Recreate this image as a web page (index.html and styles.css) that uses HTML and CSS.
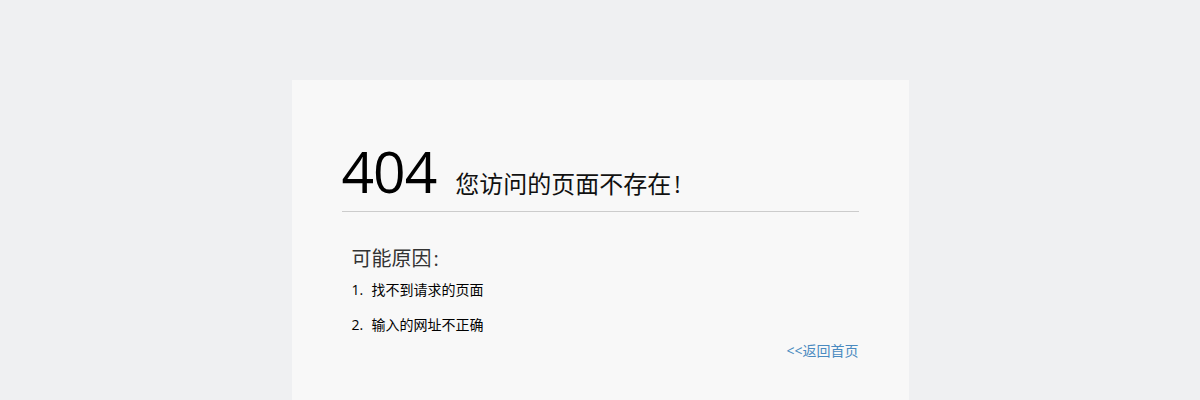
FILE: index.html
```html
<!DOCTYPE html>
<html lang="zh-CN">
<head>
    <meta charset="UTF-8">
    <title>404 - 页面不存在</title>
    <link rel="stylesheet" href="styles.css">
</head>
<body>
    <div class="error-box">
        <h1 class="error-title">
            <span class="code">404</span>
            <span class="msg">您访问的页面不存在<span class="bang">!</span></span>
        </h1>
        <div class="reason">
            <h3>可能原因<span class="colon">:</span></h3>
            <ol>
                <li>找不到请求的页面</li>
                <li>输入的网址不正确</li>
            </ol>
            <p class="back"><a href="/">&lt;&lt;返回首页</a></p>
        </div>
    </div>
</body>
</html>
```

FILE: styles.css
```css
body {
    margin: 0;
    padding: 0;
    background-color: #eff0f2;
    font-family: "Open Sans", "Noto Sans CJK SC", sans-serif;
    color: #000;
}
.error-box {
    width: 517px;
    margin: 80px auto 0;
    padding: 58px 50px 40px;
    background-color: #f8f8f8;
    min-height: 240px;
}
.error-title {
    margin: 0;
    padding-bottom: 7px;
    border-bottom: 1px solid #ccc;
    font-weight: normal;
    display: flex;
    align-items: baseline;
}
.code {
    font-size: 57px;
    line-height: 66px;
    letter-spacing: -1px;
}
.msg {
    font-size: 24px;
    margin-left: 19px;
    color: #111;
}
.bang {
    margin-left: 3px;
}
.reason {
    padding: 33px 0 0 10px;
}
.reason h3 {
    margin: 0;
    font-size: 20px;
    font-weight: normal;
    color: #333;
    line-height: 28px;
}
.colon {
    margin-left: 2px;
}
ol {
    margin: 7px 0 0;
    padding: 0;
    list-style: none;
    counter-reset: item;
    font-size: 14px;
}
ol li {
    line-height: 20px;
    padding-bottom: 15px;
    counter-increment: item;
}
ol li::before {
    content: counter(item) ".";
    display: inline-block;
    width: 20px;
}
.back {
    margin: -10px 0 0;
    text-align: right;
    font-size: 14px;
}
.back a {
    color: #4a8ac0;
    text-decoration: none;
}
```
